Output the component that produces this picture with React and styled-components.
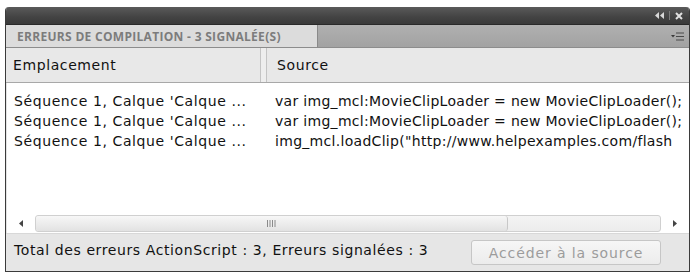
import React from "react";
import styled, { createGlobalStyle } from "styled-components";

const GlobalStyle = createGlobalStyle`
  html, body {
    margin: 0;
    padding: 0;
    background: #ffffff;
  }
  body {
    font-family: "DejaVu Sans", Tahoma, sans-serif;
  }
`;

const rows = [
  {
    location: "Séquence 1, Calque 'Calque ...",
    source: "var img_mcl:MovieClipLoader = new MovieClipLoader();",
  },
  {
    location: "Séquence 1, Calque 'Calque ...",
    source: "var img_mcl:MovieClipLoader = new MovieClipLoader();",
  },
  {
    location: "Séquence 1, Calque 'Calque ...",
    source: 'img_mcl.loadClip("http://www.helpexamples.com/flash',
  },
];

const StyledPage = styled.div`
  padding: 7px 5px 0 5px;
`;

const StyledPanel = styled.div`
  width: 685px;
  height: 265px;
  box-sizing: border-box;
  display: flex;
  flex-direction: column;
  border: 1px solid #3b3b3b;
  border-top: none;
  border-radius: 4px 4px 0 0;
  overflow: hidden;
  background: #e4e4e4;
`;

const StyledTitleBar = styled.div`
  height: 17px;
  flex-shrink: 0;
  display: flex;
  align-items: center;
  justify-content: flex-end;
  gap: 5px;
  padding-right: 6px;
  background: linear-gradient(#5a5a5a, #434343 60%, #3a3a3a);
  border-bottom: 1px solid #2a2a2a;
`;

const StyledSep = styled.span`
  width: 1px;
  height: 9px;
  background: #7a7a7a;
`;

const StyledTabStrip = styled.div`
  height: 22px;
  flex-shrink: 0;
  display: flex;
  align-items: stretch;
  background: linear-gradient(#b0b0b0, #a2a2a2);
  border-bottom: 1px solid #8c8c8c;
`;

const StyledTab = styled.div`
  width: 312px;
  display: flex;
  align-items: center;
  padding-left: 11px;
  box-sizing: border-box;
  background: #dcdcdc;
  border-right: 1px solid #8a8a8a;
  color: #7c7c7c;
  font-family: "Open Sans", "DejaVu Sans", sans-serif;
  font-weight: 700;
  font-size: 12px;
  letter-spacing: 0.3px;
  white-space: nowrap;
`;

const StyledTabMenu = styled.div`
  margin-left: auto;
  display: flex;
  align-items: center;
  padding-right: 5px;
`;

const StyledHeader = styled.div`
  height: 34px;
  flex-shrink: 0;
  display: grid;
  grid-template-columns: 253px 9px 1fr;
  align-items: center;
  background: #e8e8e8;
  border-bottom: 1px solid #a8a8a8;
  font-size: 14px;
  letter-spacing: 0.6px;
  color: #111;
`;

const StyledHeaderCell = styled.div`
  padding-left: ${(p) => p.$pad}px;
  white-space: nowrap;
`;

const StyledDivider = styled.div`
  height: 100%;
  box-sizing: border-box;
  border-left: 1px solid #c4c4c4;
  border-right: 1px solid #c4c4c4;
  width: 7px;
  margin-left: 1px;
  background: #eeeeee;
`;

const StyledList = styled.div`
  flex: 1;
  background: #ffffff;
  padding-top: 8px;
  margin-left: 1px;
  overflow: hidden;
`;

const StyledRow = styled.div`
  height: 20px;
  display: grid;
  grid-template-columns: 268px 1fr;
  align-items: center;
  font-size: 14px;
  color: #111;
  white-space: nowrap;
  overflow: hidden;
`;

const StyledCell = styled.div`
  padding-left: ${(p) => p.$pad}px;
  letter-spacing: ${(p) => p.$spacing}px;
  overflow: hidden;
`;

const StyledScrollBar = styled.div`
  height: 19px;
  flex-shrink: 0;
  display: flex;
  align-items: center;
  background: #ffffff;
  margin-left: 1px;
`;

const StyledArrow = styled.div`
  width: ${(p) => p.$w}px;
  display: flex;
  justify-content: center;
  align-items: center;
`;

const StyledTrack = styled.div`
  flex: 1;
  height: 17px;
  box-sizing: border-box;
  border: 1px solid #d0d0d0;
  border-radius: 3px;
  background: linear-gradient(#f4f4f4, #ececec);
  display: flex;
`;

const StyledThumb = styled.div`
  width: 472px;
  height: 100%;
  box-sizing: border-box;
  border-right: 1px solid #c8c8c8;
  border-radius: 3px;
  background: linear-gradient(#f7f7f7, #e2e2e2);
  display: flex;
  justify-content: center;
  align-items: center;
`;

const StyledFooter = styled.div`
  height: 37px;
  flex-shrink: 0;
  display: flex;
  align-items: center;
  padding: 0 28px 0 8px;
  background: #e6e6e6;
  border-top: 1px solid #d8d8d8;
  font-size: 14px;
  letter-spacing: 0.6px;
  color: #111;
`;

const StyledFooterText = styled.span`
  margin-top: -6px;
  white-space: nowrap;
`;

const StyledButton = styled.button`
  margin-left: auto;
  width: 190px;
  height: 25px;
  border: 1px solid #c6c6c6;
  border-radius: 3px;
  background: linear-gradient(#f6f6f6, #ececec);
  color: #9c9c9c;
  font-family: "DejaVu Sans", Tahoma, sans-serif;
  font-size: 14px;
  letter-spacing: 0.9px;
  padding: 0;
  white-space: nowrap;
`;

const CollapseIcon = () => (
  <svg width="9" height="7" viewBox="0 0 9 7">
    <path d="M4 0 L0 3.5 L4 7 Z M9 0 L5 3.5 L9 7 Z" fill="#d8d8d8" />
  </svg>
);

const CloseIcon = () => (
  <svg width="8" height="8" viewBox="0 0 8 8">
    <path d="M1 1 L7 7 M7 1 L1 7" stroke="#e0e0e0" strokeWidth="2" />
  </svg>
);

const MenuIcon = () => (
  <svg width="13" height="9" viewBox="0 0 13 9">
    <path d="M0 3 L4 3 L2 5.5 Z" fill="#3a3a3a" />
    <path d="M5 1 H13 M5 4.5 H13 M5 8 H13" stroke="#4a4a4a" strokeWidth="1" />
  </svg>
);

const GripIcon = () => (
  <svg width="9" height="7" viewBox="0 0 9 7">
    <path d="M0.5 0 V7 M3 0 V7 M5.5 0 V7 M8 0 V7" stroke="#8a8a8a" strokeWidth="1" />
  </svg>
);

const ArrowIcon = ({ dir }) => (
  <svg width="4" height="7" viewBox="0 0 4 7">
    <path d={dir === "left" ? "M4 0 L0 3.5 L4 7 Z" : "M0 0 L4 3.5 L0 7 Z"} fill="#444" />
  </svg>
);

export default function App() {
  return (
    <StyledPage>
      <GlobalStyle />
      <StyledPanel>
        <StyledTitleBar>
          <CollapseIcon />
          <StyledSep />
          <CloseIcon />
        </StyledTitleBar>
        <StyledTabStrip>
          <StyledTab>ERREURS DE COMPILATION - 3 SIGNALÉE(S)</StyledTab>
          <StyledTabMenu>
            <MenuIcon />
          </StyledTabMenu>
        </StyledTabStrip>
        <StyledHeader>
          <StyledHeaderCell $pad={7}>Emplacement</StyledHeaderCell>
          <StyledDivider />
          <StyledHeaderCell $pad={9}>Source</StyledHeaderCell>
        </StyledHeader>
        <StyledList>
          {rows.map((row, i) => (
            <StyledRow key={i}>
              <StyledCell $pad={7} $spacing={0.6}>
                {row.location}
              </StyledCell>
              <StyledCell $pad={0} $spacing={0.3}>
                {row.source}
              </StyledCell>
            </StyledRow>
          ))}
        </StyledList>
        <StyledScrollBar>
          <StyledArrow $w={28}>
            <ArrowIcon dir="left" />
          </StyledArrow>
          <StyledTrack>
            <StyledThumb>
              <GripIcon />
            </StyledThumb>
          </StyledTrack>
          <StyledArrow $w={28}>
            <ArrowIcon dir="right" />
          </StyledArrow>
        </StyledScrollBar>
        <StyledFooter>
          <StyledFooterText>
            Total des erreurs ActionScript : 3, Erreurs signalées : 3
          </StyledFooterText>
          <StyledButton disabled>Accéder à la source</StyledButton>
        </StyledFooter>
      </StyledPanel>
    </StyledPage>
  );
}
